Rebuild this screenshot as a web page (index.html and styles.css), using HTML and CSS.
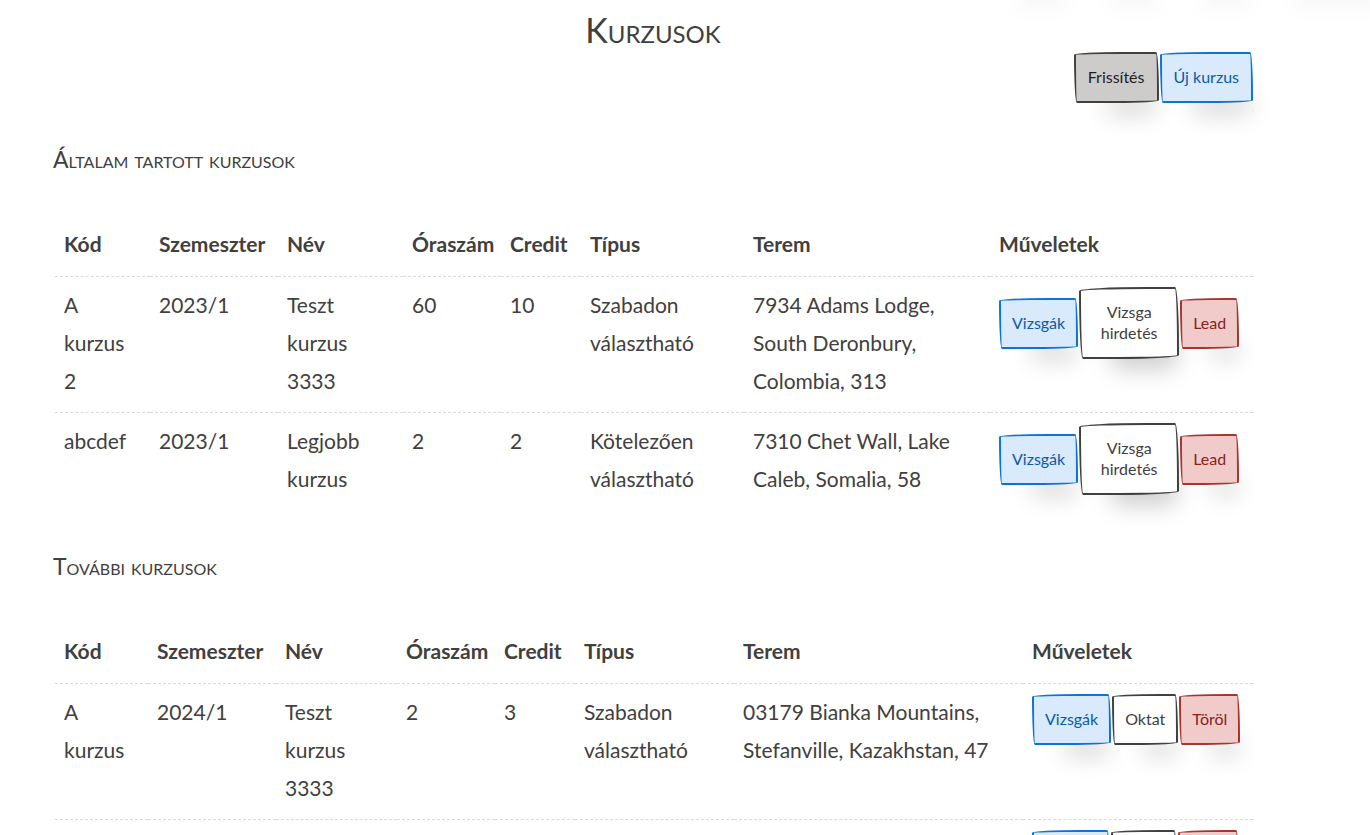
FILE: index.html
```html
<!DOCTYPE html>
<html lang="hu">
<head>
<meta charset="utf-8">
<title>Kurzusok</title>
<meta name="viewport" content="width=device-width, initial-scale=1">
<link rel="stylesheet" href="styles.css">
</head>
<body>
<div class="nav-shade" aria-hidden="true">
  <span class="shade"></span>
  <span class="shade"></span>
  <span class="shade"></span>
  <span class="shade shade-wide"></span>
</div>
<main class="page">
  <h1 class="title">Kurzusok</h1>
  <div class="toolbar">
    <button type="button" class="btn btn-muted">Frissítés</button>
    <button type="button" class="btn btn-blue">Új kurzus</button>
  </div>

  <section class="block">
    <h2 class="subtitle">Általam tartott kurzusok</h2>
    <table class="courses own">
      <colgroup><col class="c1"><col class="c2"><col class="c3"><col class="c4"><col class="c5"><col class="c6"><col class="c7"><col class="c8"></colgroup>
      <thead>
        <tr><th scope="col">Kód</th><th scope="col">Szemeszter</th><th scope="col">Név</th><th scope="col">Óraszám</th><th scope="col">Credit</th><th scope="col">Típus</th><th scope="col">Terem</th><th scope="col">Műveletek</th></tr>
      </thead>
      <tbody>
        <tr>
          <td>A kurzus 2</td><td>2023/1</td><td class="name">Teszt kurzus 3333</td><td>60</td><td>10</td><td>Szabadon választható</td><td class="room">7934 Adams Lodge, South Deronbury, Colombia, 313</td>
          <td><div class="actions"><button type="button" class="btn btn-blue">Vizsgák</button><button type="button" class="btn btn-tall">Vizsga hirdetés</button><button type="button" class="btn btn-red">Lead</button></div></td>
        </tr>
        <tr>
          <td>abcdef</td><td>2023/1</td><td class="name">Legjobb kurzus</td><td>2</td><td>2</td><td>Kötelezően választható</td><td class="room">7310 Chet Wall, Lake Caleb, Somalia, 58</td>
          <td><div class="actions"><button type="button" class="btn btn-blue">Vizsgák</button><button type="button" class="btn btn-tall">Vizsga hirdetés</button><button type="button" class="btn btn-red">Lead</button></div></td>
        </tr>
      </tbody>
    </table>
  </section>

  <section class="block">
    <h2 class="subtitle">További kurzusok</h2>
    <table class="courses other">
      <colgroup><col class="c1"><col class="c2"><col class="c3"><col class="c4"><col class="c5"><col class="c6"><col class="c7"><col class="c8"></colgroup>
      <thead>
        <tr><th scope="col">Kód</th><th scope="col">Szemeszter</th><th scope="col">Név</th><th scope="col">Óraszám</th><th scope="col">Credit</th><th scope="col">Típus</th><th scope="col">Terem</th><th scope="col">Műveletek</th></tr>
      </thead>
      <tbody>
        <tr>
          <td>A kurzus</td><td>2024/1</td><td class="name">Teszt kurzus 3333</td><td>2</td><td>3</td><td>Szabadon választható</td><td class="room">03179 Bianka Mountains, Stefanville, Kazakhstan, 47</td>
          <td><div class="actions"><button type="button" class="btn btn-blue">Vizsgák</button><button type="button" class="btn">Oktat</button><button type="button" class="btn btn-red">Töröl</button></div></td>
        </tr>
        <tr>
          <td></td><td></td><td></td><td></td><td></td><td></td><td></td>
          <td><div class="actions"><button type="button" class="btn btn-blue btn-next" aria-label="Vizsgák"></button><button type="button" class="btn btn-next" aria-label="Oktat"></button><button type="button" class="btn btn-red btn-next" aria-label="Töröl"></button></div></td>
        </tr>
      </tbody>
    </table>
  </section>
</main>
</body>
</html>
```
FILE: styles.css
```css
* { box-sizing: border-box; }

body {
  margin: 0;
  height: 100vh;
  overflow: hidden;
  background: #fff;
  color: #41403e;
  font-family: Lato, sans-serif;
  font-size: 21px;
  line-height: 38px;
}

/* Shadows cast by the navigation just above the visible area */
.nav-shade {
  display: flex;
  justify-content: flex-end;
  gap: 10px;
  height: 0;
  margin-right: -10px;
}
.shade {
  width: 82px;
  height: 40px;
  margin-top: -50px;
  border-radius: 255px 15px 225px 15px / 15px 225px 15px 255px;
  box-shadow: 15px 28px 25px -18px rgba(0, 0, 0, 0.2);
}
.shade-wide { width: 118px; }

.page { padding: 8px 117px 0 53px; }

.title {
  margin: 0;
  font-size: 34px;
  font-weight: 400;
  font-variant: small-caps;
  line-height: 44px;
  text-align: center;
}

.toolbar {
  display: flex;
  justify-content: flex-end;
  gap: 1px;
}
.toolbar .btn {
  padding-left: 12px;
  padding-right: 12px;
}

.subtitle {
  margin: 0;
  font-size: 23px;
  font-weight: 400;
  font-variant: small-caps;
  line-height: 36px;
}
.block { padding-top: 38px; }

.courses {
  width: calc(100% - 2px);
  margin: 38px 0 0 2px;
  border-collapse: collapse;
  table-layout: fixed;
}
.courses th,
.courses td {
  padding: 9px 9px 12px;
  border-bottom: 1px dashed #d9d9d8;
  text-align: left;
  vertical-align: top;
}
.courses th {
  padding-top: 10px;
  padding-bottom: 13px;
  white-space: nowrap;
}
.courses td:last-child { padding-top: 10px; }
.courses.own tbody tr:last-child td { border-bottom: 0; }
.courses td.name { padding-right: 40px; }
.courses td.room { padding-right: 30px; }

.own .c1 { width: 95px; }
.own .c2 { width: 128px; }
.own .c3 { width: 125px; }
.own .c4 { width: 98px; }
.own .c5 { width: 80px; }
.own .c6 { width: 163px; }
.own .c7 { width: 246px; }
.own .c8 { width: 263px; }

.other .c1 { width: 93px; }
.other .c2 { width: 128px; }
.other .c3 { width: 121px; }
.other .c4 { width: 98px; }
.other .c5 { width: 80px; }
.other .c6 { width: 159px; }
.other .c7 { width: 289px; }
.other .c8 { width: 230px; }

.actions {
  display: flex;
  align-items: center;
  gap: 1px;
}

.btn {
  flex: none;
  padding: 12px 11px 14px;
  border: 2px solid #41403e;
  border-radius: 255px 15px 225px 15px / 15px 225px 15px 255px;
  background: #fff;
  color: #41403e;
  font-family: inherit;
  font-size: 16px;
  line-height: 21px;
  box-shadow: 15px 28px 25px -18px rgba(0, 0, 0, 0.2);
}
.btn-muted { background: #cdcccb; color: #1f1e1d; }
.btn-blue { background: #d8eafc; border-color: #0b74d5; color: #0b5aa3; }
.btn-red { background: #f0cbc9; border-color: #a7342d; color: #86221c; }
.btn-tall { width: 100px; }
.btn-next { width: 66px; height: 51px; }
.btn-blue.btn-next { width: 78px; }
.btn-red.btn-next { width: 61px; }
```
